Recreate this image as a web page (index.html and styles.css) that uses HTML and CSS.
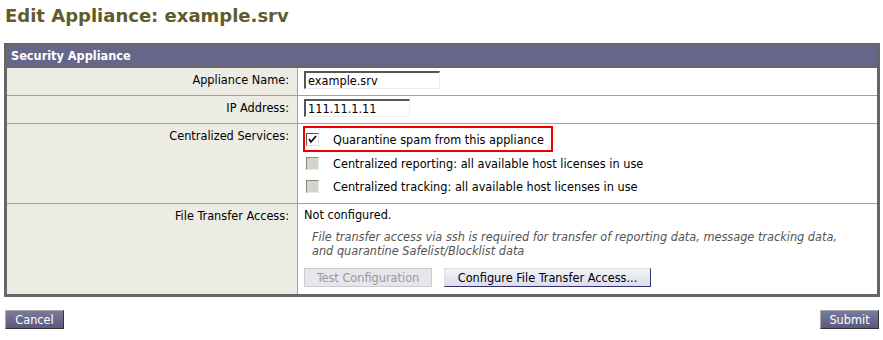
FILE: index.html
```html
<!DOCTYPE html>
<html>
<head>
<meta charset="utf-8">
<link rel="stylesheet" href="styles.css">
</head>
<body>
<h1 class="title">Edit Appliance: example.srv</h1>
<div class="panel">
  <div class="panel-head">Security Appliance</div>
  <div class="row">
    <div class="label">Appliance Name:</div>
    <div class="value"><input class="field field-name" type="text" value="example.srv"></div>
  </div>
  <div class="row">
    <div class="label">IP Address:</div>
    <div class="value"><input class="field field-ip" type="text" value="111.11.1.11"></div>
  </div>
  <div class="row">
    <div class="label">Centralized Services:</div>
    <div class="value services">
      <div class="check-row highlight"><span class="cb checked"><svg viewBox="0 0 13 13" width="13" height="13"><path d="M3 6 L5 9 L10 3" fill="none" stroke="#000" stroke-width="1.6"/></svg></span><span>Quarantine spam from this appliance</span></div>
      <div class="check-row"><span class="cb disabled"></span><span>Centralized reporting: all available host licenses in use</span></div>
      <div class="check-row"><span class="cb disabled"></span><span>Centralized tracking: all available host licenses in use</span></div>
    </div>
  </div>
  <div class="row last">
    <div class="label">File Transfer Access:</div>
    <div class="value transfer">
      <div>Not configured.</div>
      <div class="note">File transfer access via ssh is required for transfer of reporting data, message tracking data, and quarantine Safelist/Blocklist data</div>
      <div class="btns">
        <button class="btn btn-disabled" type="button">Test Configuration</button>
        <button class="btn btn-light" type="button">Configure File Transfer Access...</button>
      </div>
    </div>
  </div>
</div>
<div class="footer">
  <button class="btn btn-dark" type="button">Cancel</button>
  <button class="btn btn-dark" type="button">Submit</button>
</div>
</body>
</html>
```
FILE: styles.css
```css
html, body { margin: 0; padding: 0; background: #fff; }
body {
  font-family: "DejaVu Sans Condensed", "DejaVu Sans", sans-serif;
  font-size: 12.6px;
  color: #000;
  width: 883px;
}
.title {
  margin: 0;
  padding: 5px 0 0 5px;
  height: 43px;
  box-sizing: border-box;
  font-family: "DejaVu Sans", sans-serif;
  font-size: 18px;
  font-weight: bold;
  color: #5e5c2c;
  line-height: 22px;
}
.panel {
  margin-left: 4px;
  width: 876px;
  box-sizing: border-box;
  border: 3px solid #666;
  border-top-width: 2px;
}
.panel-head {
  background: #66668a;
  color: #fff;
  font-weight: bold;
  height: 21px;
  line-height: 21px;
  padding-left: 4px;
  border-bottom: 2px solid #666;
}
.row {
  display: flex;
  border-bottom: 1px solid #a0a0a0;
}
.row.last { border-bottom: none; }
.label {
  width: 291px;
  flex: none;
  background: #ecece4;
  text-align: right;
  padding: 5px 8px 0 0;
  box-sizing: border-box;
  border-right: 1px solid #a0a0a0;
  line-height: 14px;
}
.value {
  flex: 1;
  padding: 3px 6px;
}
.field {
  font-family: "DejaVu Sans Condensed", "DejaVu Sans", sans-serif;
  font-size: 12.6px;
  height: 18px;
  box-sizing: border-box;
  padding: 0 2px;
  margin: 0;
  border: 2px solid;
  border-color: #555 #eee #eee #555;
  border-width: 2px 1px 1px 2px;
  background: #fff;
  color: #000;
  display: block;
}
.field-name { width: 136px; }
.field-ip { width: 106px; }
.row:nth-child(2) .value, .row:nth-child(3) .value { height: 27px; box-sizing: border-box; }
.services { padding: 2px 0 5px 5px; }
.check-row {
  display: flex;
  align-items: center;
  height: 23px;
  padding-left: 3px;
  width: 250px;
  box-sizing: border-box;
}
.check-row.highlight {
  border: 2px solid #e00;
  height: 26px;
  padding-left: 1px;
}
.cb {
  width: 13px;
  height: 13px;
  box-sizing: border-box;
  flex: none;
  margin-right: 14px;
  display: inline-block;
}
.cb svg { display: block; margin: -1px; }
.cb.checked {
  border: 1px solid;
  border-color: #555 #ddd #ddd #555;
  background: #fff;
}
.cb.disabled {
  border: 1px solid;
  border-color: #888 #e8e8e8 #e8e8e8 #888;
  background: #d6d3cc;
}
.check-row span:last-child { white-space: nowrap; }
.transfer { padding: 4px 6px 7px 6px; line-height: 14px; }
.note {
  font-style: italic;
  color: #555;
  padding: 8px 0 0 8px;
  max-width: 545px;
}
.btns {
  display: flex;
  gap: 12px;
  margin-top: 10px;
}
.btn {
  font-family: "DejaVu Sans Condensed", "DejaVu Sans", sans-serif;
  font-size: 12.6px;
  height: 19px;
  padding: 0 6px;
  margin: 0;
  box-sizing: border-box;
  line-height: 15px;
  cursor: default;
  white-space: nowrap;
}
.btn-disabled {
  background: #e6e6ec;
  color: #999;
  border: 1px solid #c8c8d0;
  width: 128px;
}
.btn-light {
  background: linear-gradient(#f2f2fa, #dcdcec);
  color: #000;
  border: 1px solid;
  border-color: #ddd #33336a #33336a #ddd;
  width: 207px;
}
.footer {
  display: flex;
  justify-content: space-between;
  padding: 13px 4px 0 5px;
}
.btn-dark {
  background: linear-gradient(#7a7a9e, #5a5a80);
  color: #fff;
  border: 1px solid;
  border-color: #aaa #333 #333 #aaa;
  width: 59px;
  padding: 0;
}
```
